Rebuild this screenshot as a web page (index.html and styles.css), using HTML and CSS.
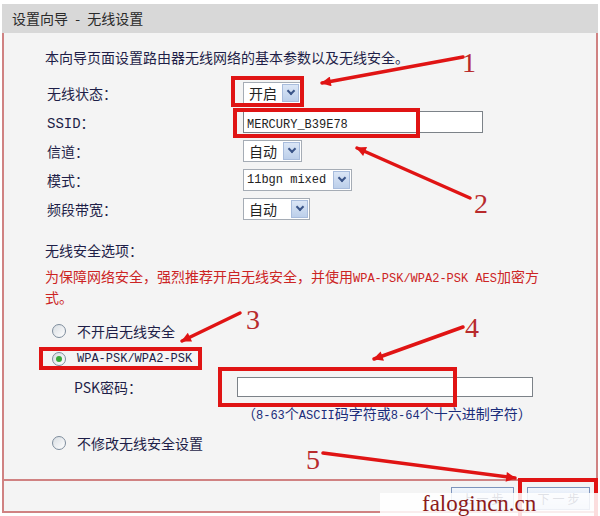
FILE: index.html
```html
<!DOCTYPE html>
<html lang="zh-CN">
<head>
    <meta charset="UTF-8">
    <meta name="viewport" content="width=device-width, initial-scale=1.0">
    <title>设置向导 - 无线设置</title>
    <link rel="stylesheet" href="styles.css">
</head>
<body>
<div class="page">
    <div class="window">
        <div class="title-bar">设置向导 <span class="dash">-</span> 无线设置</div>
        <div class="panel">
            <p class="intro">本向导页面设置路由器无线网络的基本参数以及无线安全。</p>

            <div class="form-grid">
                <div class="label">无线状态：</div>
                <div><span class="select w-58"><span class="value">开启</span><span class="drop"></span></span></div>

                <div class="label"><span class="en-label">SSID</span>：</div>
                <div><span class="text-input ssid"><span class="en">MERCURY_B39E78</span></span></div>

                <div class="label">信道：</div>
                <div><span class="select w-59"><span class="value">自动</span><span class="drop"></span></span></div>

                <div class="label">模式：</div>
                <div><span class="select w-109"><span class="value en">11bgn mixed</span><span class="drop"></span></span></div>

                <div class="label">频段带宽：</div>
                <div><span class="select w-67"><span class="value">自动</span><span class="drop"></span></span></div>
            </div>

            <div class="section-title">无线安全选项：</div>
            <p class="warning">为保障网络安全，强烈推荐开启无线安全，并使用<span class="en">WPA-PSK/WPA2-PSK AES</span>加密方<br>式。</p>

            <div class="radio-row first"><span class="radio"></span>不开启无线安全</div>
            <div class="radio-row"><span class="radio checked"></span><span class="en">WPA-PSK/WPA2-PSK</span></div>
            <div class="psk-row">
                <span class="psk-label">PSK密码：</span>
                <span class="text-input psk"></span>
            </div>
            <div class="hint">（<span class="en">8-63</span>个<span class="en">ASCII</span>码字符或<span class="en">8-64</span>个十六进制字符）</div>
            <div class="radio-row last"><span class="radio"></span>不修改无线安全设置</div>
        </div>
        <div class="footer">
            <button class="btn">上一步</button>
            <button class="btn">下一步</button>
        </div>
    </div>

    <!-- red marks drawn on top of the screenshot -->
    <svg class="marks" width="600" height="516" viewBox="0 0 600 516">
        <defs>
            <marker id="head" viewBox="0 0 10 10" refX="9" refY="5" markerWidth="3.6" markerHeight="2.8" orient="auto">
                <path d="M0,0 L10,5 L0,10 z" fill="#e01414"/>
            </marker>
        </defs>
        <g fill="none" stroke="#e01414" stroke-width="4">
            <rect x="233" y="78" width="69" height="27"/>
            <rect x="235" y="110" width="183" height="26"/>
            <rect x="41" y="349" width="159" height="19"/>
            <rect x="220" y="369" width="235" height="36"/>
            <rect x="520" y="480" width="76" height="40"/>
        </g>
        <g stroke="#e01414" stroke-width="3.5" stroke-linecap="round" marker-end="url(#head)">
            <line x1="463" y1="57" x2="322" y2="83"/>
            <line x1="470" y1="198" x2="357" y2="148"/>
            <line x1="240" y1="313" x2="182" y2="341"/>
            <line x1="463" y1="327" x2="374" y2="359"/>
            <line x1="323" y1="453" x2="515" y2="478"/>
        </g>
        <g class="mark-num">
            <text x="462" y="72">1</text>
            <text x="474" y="213">2</text>
            <text x="246" y="329">3</text>
            <text x="465" y="337">4</text>
            <text x="306" y="469">5</text>
        </g>
    </svg>

    <div class="watermark">falogincn.cn</div>
</div>
</body>
</html>
```

FILE: styles.css
```css
body {
    margin: 0;
    background: #fff;
    font-family: "Noto Sans CJK SC", sans-serif;
    font-size: 14px;
    color: #1e1e48;
}
.page {
    position: relative;
    width: 600px;
    height: 516px;
    overflow: hidden;
}
.en {
    font-family: "Liberation Mono", monospace;
    font-size: 12px;
    line-height: 1;
}
.en-label {
    font-family: "Liberation Mono", monospace;
    line-height: 1;
}
.window {
    margin: 4px 0 0 2px;
    width: 596px;
}
.title-bar {
    height: 29px;
    line-height: 29px;
    padding-left: 10px;
    background: #d8d8d8;
    color: #2a2a2a;
}
.title-bar .dash {
    margin: 0 4px;
}
.panel {
    box-sizing: border-box;
    height: 448px;
    padding: 14px 0 0 41px;
    background: #f4f4f4;
    border-left: 2px solid #d08282;
    border-right: 2px solid #d08282;
    border-bottom: 2px solid #d08282;
}
.intro {
    margin: 0;
    line-height: 20px;
}
.form-grid {
    display: grid;
    grid-template-columns: 196px auto;
    grid-auto-rows: 29px;
    align-items: center;
    margin-top: 11px;
    padding-left: 2px;
}
.label {
    line-height: 20px;
}
.select {
    box-sizing: border-box;
    display: inline-flex;
    align-items: center;
    justify-content: space-between;
    height: 22px;
    padding: 1px;
    background: #fff;
    border: 1px solid #a5acb5;
    vertical-align: middle;
}
.select .value {
    padding-left: 4px;
    line-height: 18px;
    color: #222;
}
.select .value.en {
    padding-left: 2px;
}
.w-58 { width: 58px; }
.w-59 { width: 59px; }
.w-109 { width: 109px; }
.w-67 { width: 67px; }
.drop {
    position: relative;
    width: 17px;
    height: 18px;
    background: linear-gradient(#dbe6f6, #bccfea);
    border: 1px solid #a8bcdc;
    box-sizing: border-box;
}
.drop::after {
    content: "";
    position: absolute;
    left: 5px;
    top: 3px;
    width: 4px;
    height: 4px;
    border-right: 2px solid #3a5488;
    border-bottom: 2px solid #3a5488;
    transform: rotate(45deg);
}
.text-input {
    box-sizing: border-box;
    display: inline-block;
    background: #fff;
    border: 1px solid #7c8288;
    vertical-align: middle;
}
.ssid {
    width: 240px;
    height: 22px;
    line-height: 20px;
    padding-left: 3px;
    color: #222;
}
.section-title {
    margin-top: 17px;
    line-height: 20px;
}
.warning {
    margin: 6px 0 0;
    width: 505px;
    line-height: 21px;
    color: #cc2424;
}
.radio-row {
    display: flex;
    align-items: center;
    gap: 11px;
    height: 28px;
    padding-left: 7px;
}
.radio-row.first {
    margin-top: 9px;
}
.radio-row.last {
    margin-top: 6px;
}
.radio {
    box-sizing: border-box;
    position: relative;
    width: 14px;
    height: 14px;
    border: 1px solid #7d8c9c;
    border-radius: 50%;
    background: linear-gradient(135deg, #d8dde2, #ffffff);
}
.radio.checked::after {
    content: "";
    position: absolute;
    left: 3px;
    top: 3px;
    width: 6px;
    height: 6px;
    border-radius: 50%;
    background: #3aa83a;
}
.psk-row {
    display: flex;
    align-items: center;
    height: 27px;
    padding-left: 29px;
}
.psk-label {
    width: 163px;
}
.psk {
    width: 296px;
    height: 20px;
}
.hint {
    margin: 3px 0 0 197px;
    line-height: 20px;
    color: #1a2c7a;
}
.footer {
    box-sizing: border-box;
    display: flex;
    justify-content: flex-end;
    gap: 13px;
    height: 32px;
    padding: 6px 6px 0 0;
    background: #f4f4f4;
    border-left: 2px solid #d08282;
    border-right: 2px solid #d08282;
    border-bottom: 2px solid #d08282;
}
.btn {
    width: 63px;
    height: 23px;
    padding: 0;
    font-family: "Noto Sans CJK SC", sans-serif;
    font-size: 12px;
    line-height: 1;
    letter-spacing: 3px;
    text-indent: 3px;
    color: #1e2a50;
    background: linear-gradient(#f2f6fc, #c6d6ee);
    border: 1px solid #7d94bc;
}
.marks {
    position: absolute;
    left: 0;
    top: 0;
    pointer-events: none;
}
.mark-num {
    font-family: "Liberation Serif", serif;
    font-size: 28px;
    fill: #b82a2c;
}
.watermark {
    position: absolute;
    left: 380px;
    top: 493px;
    width: 178px;
    height: 23px;
    padding-left: 42px;
    background: rgba(255, 255, 255, 0.86);
    font-family: "Liberation Serif", serif;
    font-size: 23px;
    line-height: 22px;
    color: #8c1c1c;
}
```
